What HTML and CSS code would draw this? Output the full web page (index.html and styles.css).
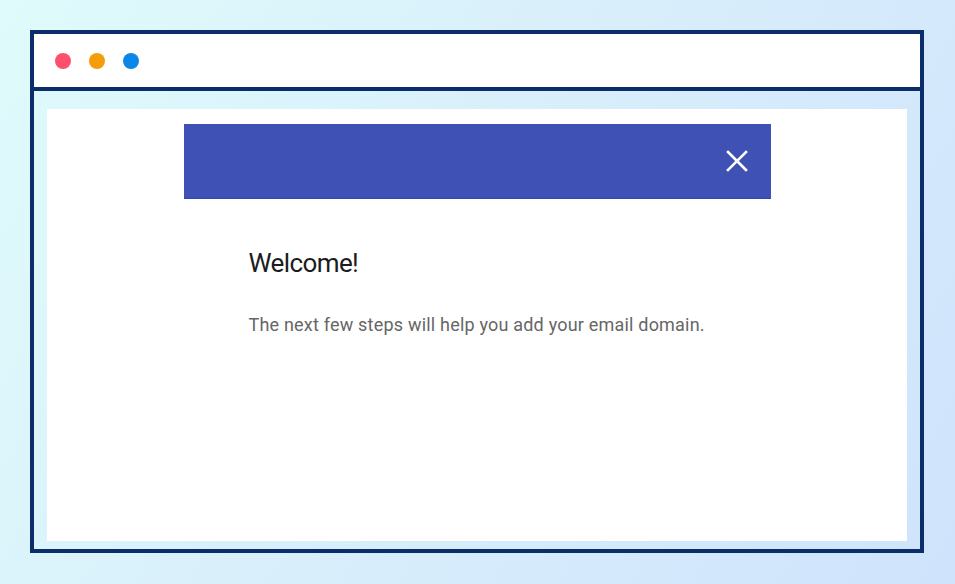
FILE: index.html
```html
<!DOCTYPE html>
<html lang="en">
  <head>
    <meta charset="UTF-8" />
    <meta name="viewport" content="width=device-width, initial-scale=1.0" />
    <title>Add email domain</title>
    <link rel="stylesheet" href="styles.css">
  </head>
  <body>
    <div class="browser-frame">
      <div class="browser-bar">
        <span class="dot dot-red"></span>
        <span class="dot dot-orange"></span>
        <span class="dot dot-blue"></span>
      </div>
      <div class="browser-content">
        <div class="page">
          <div class="dialog-header">
            <button class="close-btn" aria-label="Close">
              <svg width="22" height="22" viewBox="0 0 22 22">
                <path d="M2 2 L20 20 M20 2 L2 20" stroke="#fff" stroke-width="2.6" stroke-linecap="square" />
              </svg>
            </button>
          </div>
          <div class="dialog-body">
            <h2>Welcome!</h2>
            <p>The next few steps will help you add your email domain.</p>
          </div>
        </div>
      </div>
    </div>
  </body>
</html>
```

FILE: styles.css
```css
body {
  margin: 0;
  font-family: Roboto, "Liberation Sans", Arial, sans-serif;
  background: linear-gradient(120deg, #dffbfb 0%, #d8eefb 50%, #cfe3fc 100%);
  height: 584px;
  overflow: hidden;
}

.browser-frame {
  margin: 30px;
  width: 894px;
  height: 523px;
  box-sizing: border-box;
  border: 4px solid #0b2d6a;
  display: flex;
  flex-direction: column;
}

.browser-bar {
  height: 53px;
  background-color: white;
  border-bottom: 4px solid #0b2d6a;
  display: flex;
  align-items: center;
  gap: 18px;
  padding-left: 21px;
}

.dot {
  width: 16px;
  height: 16px;
  border-radius: 50%;
}

.dot-red {
  background-color: #fe4f6d;
}

.dot-orange {
  background-color: #f59c0a;
}

.dot-blue {
  background-color: #0c87e8;
}

.browser-content {
  flex: 1;
  padding: 18px 13px 8px;
  display: flex;
}

.page {
  flex: 1;
  background-color: white;
  padding-top: 15px;
}

.dialog-header {
  width: 587px;
  height: 75px;
  box-sizing: border-box;
  margin: 0 auto;
  background-color: #3f51b5;
  border-bottom: 1px solid #3346b8;
  display: flex;
  align-items: center;
  justify-content: flex-end;
  padding-right: 23px;
}

.close-btn {
  background: none;
  border: none;
  padding: 0;
  width: 22px;
  height: 22px;
  cursor: pointer;
  display: flex;
}

.dialog-body {
  width: 587px;
  margin: 0 auto;
  padding-left: 65px;
  box-sizing: border-box;
}

.dialog-body h2 {
  margin: 49px 0 0;
  font-size: 26px;
  font-weight: 400;
  line-height: 30px;
  letter-spacing: -0.6px;
  color: #1c1c1c;
}

.dialog-body p {
  margin: 36px 0 0;
  font-size: 18px;
  line-height: 21px;
  letter-spacing: 0.2px;
  color: #666;
  white-space: nowrap;
}
```
